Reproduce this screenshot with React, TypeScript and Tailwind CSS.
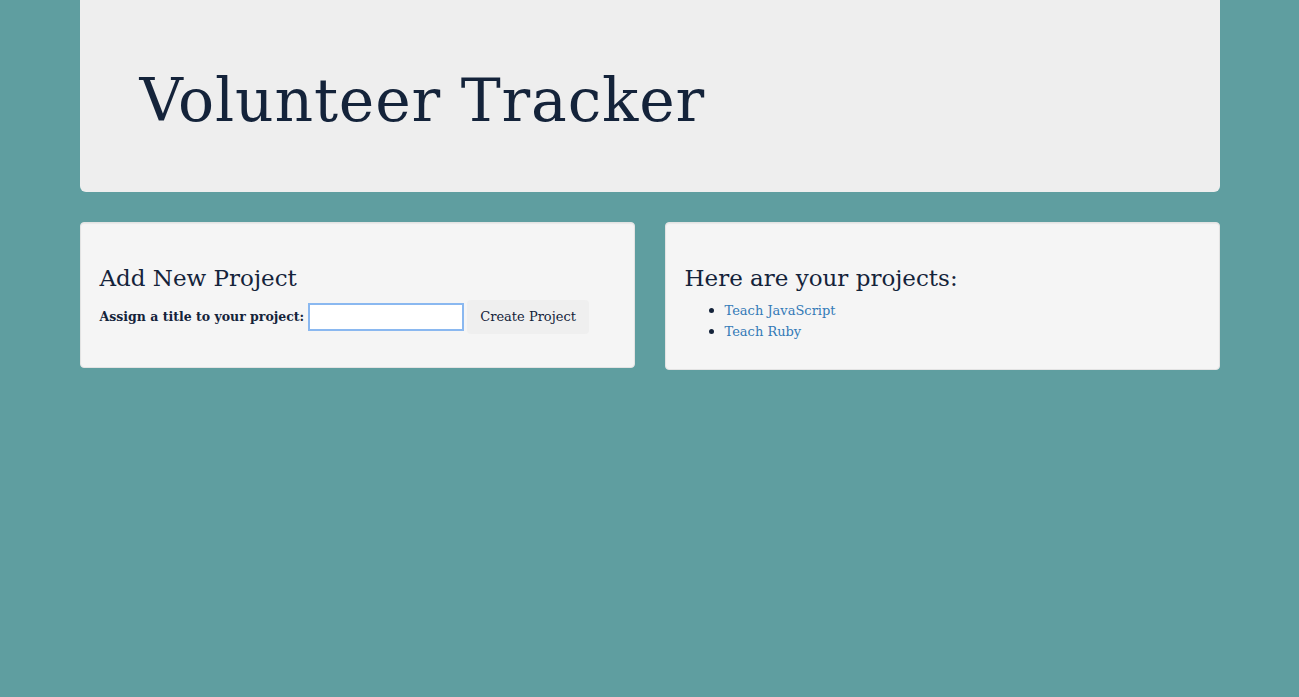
import React from "react";

const serif = "font-['DejaVu_Serif','Liberation_Serif',serif]";

const projects = ["Teach JavaScript", "Teach Ruby"];

export default function App() {
  return (
    <div className={`min-h-[697px] bg-[#5f9ea0] text-[#14233a] ${serif}`}>
      <div className="mx-auto w-[1140px]">
        <div className="rounded-b-[6px] bg-[#eeeeee] px-[60px] pt-[54px] pb-[46px]">
          <h1 className="text-[60px] leading-[92px] tracking-[0.8px]">Volunteer Tracker</h1>
        </div>

        <div className="mt-[30px] grid grid-cols-2 items-start gap-[30px]">
          <div className="rounded-[4px] border border-[#e3e3e3] bg-[#f5f5f5] px-[19px] pt-[42px] pb-[33px] shadow-[inset_0_1px_1px_rgba(0,0,0,0.05)]">
            <h3 className="text-[23px] leading-[26px]">Add New Project</h3>
            <form className="mt-[9px] flex items-center" onSubmit={(e) => e.preventDefault()}>
              <label className="text-[12.5px] font-bold">Assign a title to your project:</label>
              <input
                autoFocus
                className="ml-[4px] h-[28px] w-[156px] border-2 border-[#8ab8f0] bg-white px-[3px] text-[13px] outline-none"
              />
              <button className="ml-[3px] h-[34px] rounded-[4px] bg-[#efefef] px-[13px] text-[13px]">Create Project</button>
            </form>
          </div>

          <div className="rounded-[4px] border border-[#e3e3e3] bg-[#f5f5f5] px-[19px] pt-[42px] pb-[27px] shadow-[inset_0_1px_1px_rgba(0,0,0,0.05)]">
            <h3 className="text-[23px] leading-[26px]">Here are your projects:</h3>
            <ul className="mt-[9px] list-disc pl-[40px] text-[13px] leading-[20px] marker:text-[15px]">
              {projects.map((p) => (
                <li key={p}>
                  <a href="#" className="text-[#337ab7]">{p}</a>
                </li>
              ))}
            </ul>
          </div>
        </div>
      </div>
    </div>
  );
}
